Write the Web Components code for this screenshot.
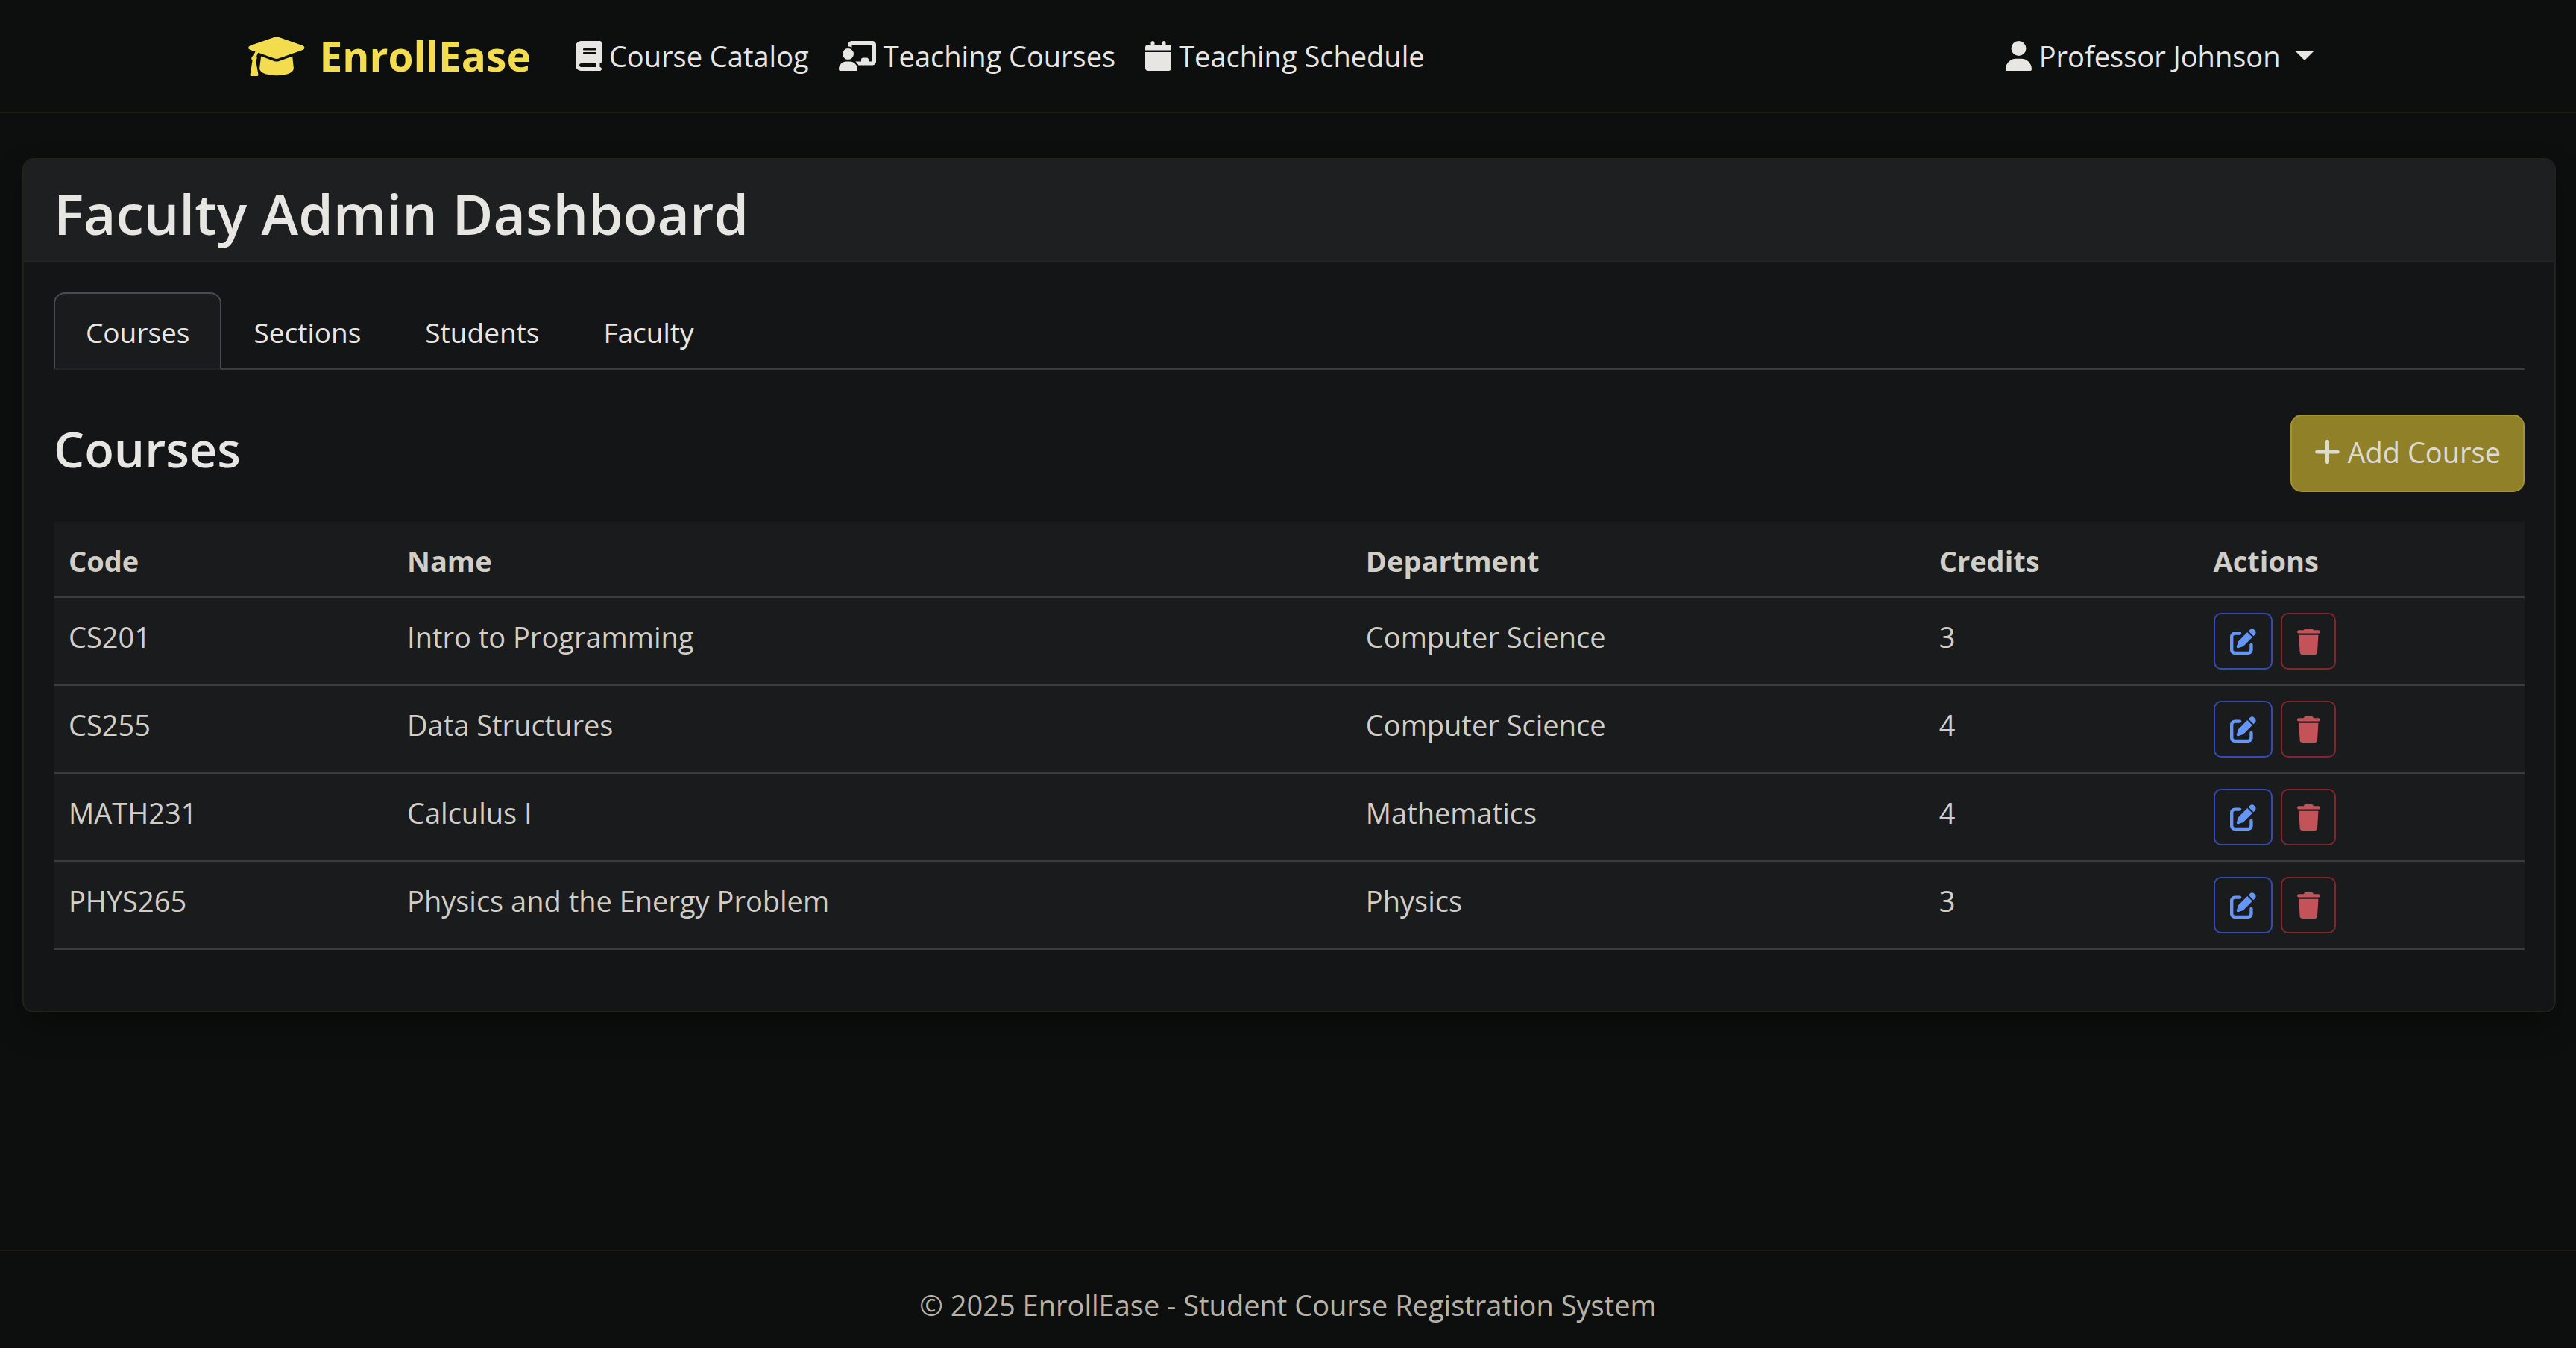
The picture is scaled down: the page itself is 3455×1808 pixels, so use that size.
<!DOCTYPE html>
<html lang="en">
<head>
<meta charset="utf-8">
<title>EnrollEase</title>
<style>
:root {
  --font: "Open Sans", "Noto Sans", sans-serif;
  --page: #0d0f0e;
  --surface: #141517;
  --raised: #1e1f21;
  --cell: #1a1b1d;
  --text: #e8e6e3;
  --text-soft: #d1cdc7;
  --text-dim: #b8b2a8;
  --brand: #f3dc4e;
  --edge: #232119;
  --line: #3b3c3e;
  --tab-line: #4a4b50;
  --fs: 38px;
  --lh: 64px;
}
body {
  margin: 0;
  background: var(--page);
  color: var(--text);
  font: 400 var(--fs)/var(--lh) var(--font);
}
</style>
</head>
<body>
<app-shell>
  <nav-bar slot="header">
    <nav-link icon="book">Course Catalog</nav-link>
    <nav-link icon="teacher">Teaching Courses</nav-link>
    <nav-link icon="calendar">Teaching Schedule</nav-link>
    <user-menu slot="end">Professor Johnson</user-menu>
  </nav-bar>
  <dashboard-card>
    <span slot="title">Faculty Admin Dashboard</span>
    <tab-list></tab-list>
    <section-head>Courses<action-button slot="action" icon="plus">Add Course</action-button></section-head>
    <course-table></course-table>
  </dashboard-card>
  <page-footer slot="footer">© 2025 EnrollEase - Student Course Registration System</page-footer>
</app-shell>

<script>
const ICONS = {
  cap: ['26 27 228 160', 'M132 29Q140 26 148 29L246 64Q253 67 253 72Q253 78 246 81L148 116Q140 119 132 116L66 93Q62 97 59 107Q63 117 56 124L66 182Q67 187 62 187H38Q32 187 33 182L42 124Q34 115 42 107L48 104Q50 95 54 88L33 81Q26 78 26 72Q26 67 33 64ZM77 107L132 127Q140 130 148 127L204 107L209 155Q209 170 185 179Q140 191 95 179Q71 170 71 155Z'],
  book: ['0 0 448 512', 'M96 0C43 0 0 43 0 96V416c0 53 43 96 96 96H384h32c17.7 0 32-14.3 32-32s-14.3-32-32-32V384c17.7 0 32-14.3 32-32V32c0-17.7-14.3-32-32-32H384 96zm0 384H352v64H96c-17.7 0-32-14.3-32-32s14.3-32 32-32zm32-240c0-8.8 7.2-16 16-16H336c8.8 0 16 7.2 16 16s-7.2 16-16 16H144c-8.8 0-16-7.2-16-16zm16 48H336c8.8 0 16 7.2 16 16s-7.2 16-16 16H144c-8.8 0-16-7.2-16-16s7.2-16 16-16z'],
  teacher: ['0 0 640 512', 'M160 64c0-35.3 28.7-64 64-64H576c35.3 0 64 28.7 64 64V352c0 35.3-28.7 64-64 64H336.8c-11.8-25.5-29.9-47.5-52.4-64H384V320c0-17.7 14.3-32 32-32h64c17.7 0 32 14.3 32 32v32h64V64L224 64v49.1C205.2 102.2 183.3 96 160 96V64zm0 64a96 96 0 1 1 0 192 96 96 0 1 1 0-192zM133.3 352h53.3C260.3 352 320 411.7 320 485.3c0 14.7-11.9 26.7-26.7 26.7H26.7C11.9 512 0 500.1 0 485.3C0 411.7 59.7 352 133.3 352z'],
  calendar: ['0 0 448 512', 'M96 32V64H48C21.5 64 0 85.5 0 112v48H448V112c0-26.5-21.5-48-48-48H352V32c0-17.7-14.3-32-32-32s-32 14.3-32 32V64H160V32c0-17.7-14.3-32-32-32S96 14.3 96 32zM448 192H0V464c0 26.5 21.5 48 48 48H400c26.5 0 48-21.5 48-48V192z'],
  user: ['0 0 448 512', 'M224 256A128 128 0 1 0 224 0a128 128 0 1 0 0 256zm-45.7 48C79.8 304 0 383.8 0 482.3C0 498.7 13.3 512 29.7 512H418.3c16.4 0 29.7-13.3 29.7-29.7C448 383.8 368.2 304 269.7 304H178.3z'],
  plus: ['0 0 448 512', 'M256 80c0-17.7-14.3-32-32-32s-32 14.3-32 32V224H48c-17.7 0-32 14.3-32 32s14.3 32 32 32H192V432c0 17.7 14.3 32 32 32s32-14.3 32-32V288H400c17.7 0 32-14.3 32-32s-14.3-32-32-32H256V80z'],
  edit: ['0 0 512 512', 'M471.6 21.7c-21.9-21.9-57.3-21.9-79.2 0L362.3 51.7l97.9 97.9 30.1-30.1c21.9-21.9 21.9-57.3 0-79.2L471.6 21.7zm-299.2 220c-6.1 6.1-10.8 13.6-13.5 21.9l-29.6 88.8c-2.9 8.6-.6 18.1 5.8 24.6s15.9 8.7 24.6 5.8l88.8-29.6c8.2-2.7 15.7-7.4 21.9-13.5L437.7 172.3 339.7 74.3 172.4 241.7zM96 64C43 64 0 107 0 160V416c0 53 43 96 96 96H352c53 0 96-43 96-96V320c0-17.7-14.3-32-32-32s-32 14.3-32 32v96c0 17.7-14.3 32-32 32H96c-17.7 0-32-14.3-32-32V160c0-17.7 14.3-32 32-32h96c17.7 0 32-14.3 32-32s-14.3-32-32-32H96z'],
  trash: ['0 0 448 512', 'M135.2 17.7L128 32H32C14.3 32 0 46.3 0 64S14.3 96 32 96H416c17.7 0 32-14.3 32-32s-14.3-32-32-32H320l-7.2-14.3C307.4 6.8 296.3 0 284.2 0H163.8c-12.1 0-23.2 6.8-28.6 17.7zM416 128H32L53.2 467c1.6 25.3 22.6 45 47.9 45H346.9c25.3 0 46.3-19.7 47.9-45L416 128z']
};
const icon = name => `<svg viewBox="${ICONS[name][0]}" fill="currentColor" aria-hidden="true"><path d="${ICONS[name][1]}"/></svg>`;

function define(tag, render) {
  customElements.define(tag, class extends HTMLElement {
    constructor() { super(); this.attachShadow({ mode: 'open' }); }
    connectedCallback() {
      this.shadowRoot.innerHTML = '<style>*{box-sizing:border-box}svg{display:block;flex:none}</style>' + render(this);
    }
  });
}

define('app-shell', () => `
<style>
:host { display: flex; flex-direction: column; min-height: 100vh; }
main { flex: 1; padding: 60px 27px 60px 30px; }
</style>
<slot name="header"></slot>
<main><slot></slot></main>
<slot name="footer"></slot>`);

define('nav-bar', () => `
<style>
:host { display: block; border-bottom: 2px solid #1e1c12; }
nav { display: flex; align-items: center; width: min(100%, 2850px); margin: 0 auto; padding: 30px; }
.brand { display: flex; align-items: center; gap: 20px; margin-right: 40px; color: var(--brand); font-size: 55px; font-weight: 700; line-height: 90px; text-decoration: none; }
.brand svg { width: 76px; height: 53px; }
.links { display: flex; flex: 1; }
</style>
<nav aria-label="Main">
  <a class="brand" href="#">${icon('cap')}<span>EnrollEase</span></a>
  <div class="links"><slot></slot></div>
  <slot name="end"></slot>
</nav>`);

define('nav-link', el => `
<style>
:host { display: block; }
a { display: flex; align-items: center; gap: 10px; padding: 0 20px; color: var(--text); text-decoration: none; white-space: nowrap; }
svg { height: 40px; }
</style>
<a href="#">${icon(el.getAttribute('icon'))}<slot></slot></a>`);

define('user-menu', () => `
<style>
:host { display: block; }
button { display: flex; align-items: center; gap: 10px; padding: 0 20px; border: 0; background: none; color: var(--text); font: inherit; white-space: nowrap; }
svg { height: 40px; }
.caret { border: 12px solid transparent; border-top-color: currentColor; border-bottom: 0; margin-left: 10px; }
</style>
<button type="button" aria-haspopup="true">${icon('user')}<slot></slot><span class="caret"></span></button>`);

define('dashboard-card', () => `
<style>
:host { display: block; border: 2px solid var(--edge); border-radius: 15px; background: var(--surface); box-shadow: 0 20px 40px rgba(0,0,0,.3); }
header { padding: 24px 40px 16px; border-bottom: 2px solid #2b291f; border-radius: 13px 13px 0 0; background: var(--raised); }
h2 { margin: 0; font-size: 75px; line-height: 96px; font-weight: 600; }
.body { padding: 40px; }
</style>
<header><h2><slot name="title"></slot></h2></header>
<div class="body"><slot></slot></div>`);

define('tab-list', () => `
<style>
:host { display: block; margin-bottom: 60px; font-size: 37px; }
div { display: flex; border-bottom: 2px solid var(--line); }
button { margin-bottom: -2px; padding: 20px 41px 16px; border: 2px solid transparent; border-radius: 15px 15px 0 0; background: none; color: var(--text); font: inherit; }
button[aria-selected=true] { border-color: var(--tab-line) var(--tab-line) #222328; background: var(--cell); }
</style>
<div role="tablist">${['Courses', 'Sections', 'Students', 'Faculty'].map((t, i) =>
  `<button type="button" role="tab" aria-selected="${i === 0}">${t}</button>`).join('')}</div>`);

define('section-head', () => `
<style>
:host { display: flex; justify-content: space-between; align-items: center; margin-bottom: 40px; }
h3 { margin: 4px 0 16px; font-size: 65px; line-height: 84px; font-weight: 600; }
</style>
<h3><slot></slot></h3><slot name="action"></slot>`);

define('action-button', el => `
<style>
:host { display: block; }
button { display: flex; align-items: center; gap: 10px; padding: 16px 30px 20px; border: 2px solid #a49331; border-radius: 15px; background: #908027; color: #dcdad5; font: inherit; }
svg { height: 40px; }
</style>
<button type="button">${icon(el.getAttribute('icon'))}<slot></slot></button>`);

const COURSES = [
  ['CS201', 'Intro to Programming', 'Computer Science', 3],
  ['CS255', 'Data Structures', 'Computer Science', 4],
  ['MATH231', 'Calculus I', 'Mathematics', 4],
  ['PHYS265', 'Physics and the Energy Problem', 'Physics', 3]
];

define('course-table', () => `
<style>
:host { display: block; margin-bottom: 42px; }
table { width: 100%; border-collapse: separate; border-spacing: 0; table-layout: fixed; color: var(--text-soft); }
col.code { width: 13.7%; } col.name { width: 38.8%; } col.dept { width: 23.2%; } col.cred { width: 11.1%; }
th, td { padding: 20px 20px 16px; border-bottom: 2px solid var(--line); background: var(--cell); text-align: left; vertical-align: top; }
td:last-child { padding-bottom: 20px; }
.actions { display: flex; gap: 11px; }
button { display: flex; align-items: center; height: 76px; padding: 0 20px; border: 2px solid; border-radius: 10px; background: none; }
svg { height: 35px; }
.edit { border-color: #344bb0; } .edit svg { color: #6496f8; }
.del { border-color: #82262c; } .del svg { color: #c45259; }
</style>
<table>
  <colgroup><col class="code"><col class="name"><col class="dept"><col class="cred"><col></colgroup>
  <thead><tr><th>Code</th><th>Name</th><th>Department</th><th>Credits</th><th>Actions</th></tr></thead>
  <tbody>${COURSES.map(r => `<tr>${r.map(c => `<td>${c}</td>`).join('')}<td><div class="actions">
    <button class="edit" type="button" aria-label="Edit ${r[0]}">${icon('edit')}</button>
    <button class="del" type="button" aria-label="Delete ${r[0]}">${icon('trash')}</button></div></td></tr>`).join('')}</tbody>
</table>`);

define('page-footer', () => `
<style>
:host { display: block; border-top: 2px solid #1f1b15; color: var(--text-dim); text-align: center; }
footer { padding: 40px 30px 26px; }
</style>
<footer><slot></slot></footer>`);
</script>
</body>
</html>
